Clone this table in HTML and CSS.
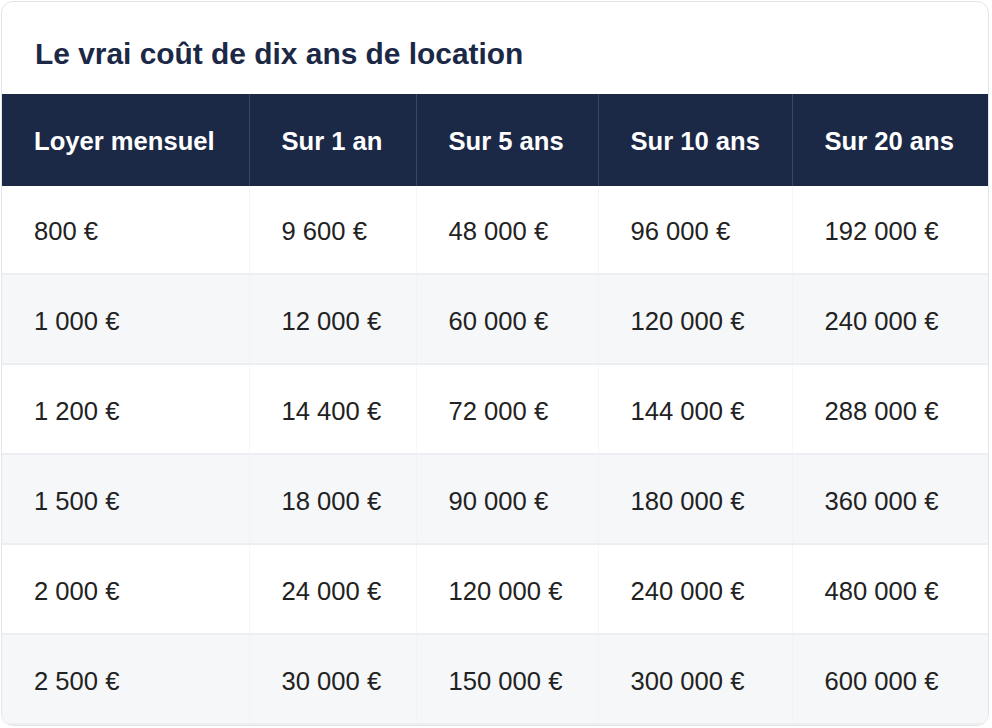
FILE: index.html
```html
<!DOCTYPE html>
<html lang="fr">
<head>
<meta charset="utf-8">
<title>Le vrai coût de dix ans de location</title>
<link rel="stylesheet" href="styles.css">
</head>
<body>
<div class="card">
  <h2 class="title">Le vrai coût de dix ans de location</h2>
  <table class="tbl">
    <colgroup>
      <col class="c1"><col class="c2"><col class="c3"><col class="c4"><col class="c5">
    </colgroup>
    <thead>
      <tr><th>Loyer mensuel</th><th>Sur 1 an</th><th>Sur 5 ans</th><th>Sur 10 ans</th><th>Sur 20 ans</th></tr>
    </thead>
    <tbody>
      <tr><td>800 €</td><td>9 600 €</td><td>48 000 €</td><td>96 000 €</td><td>192 000 €</td></tr>
      <tr><td>1 000 €</td><td>12 000 €</td><td>60 000 €</td><td>120 000 €</td><td>240 000 €</td></tr>
      <tr><td>1 200 €</td><td>14 400 €</td><td>72 000 €</td><td>144 000 €</td><td>288 000 €</td></tr>
      <tr><td>1 500 €</td><td>18 000 €</td><td>90 000 €</td><td>180 000 €</td><td>360 000 €</td></tr>
      <tr><td>2 000 €</td><td>24 000 €</td><td>120 000 €</td><td>240 000 €</td><td>480 000 €</td></tr>
      <tr><td>2 500 €</td><td>30 000 €</td><td>150 000 €</td><td>300 000 €</td><td>600 000 €</td></tr>
    </tbody>
  </table>
</div>
</body>
</html>
```

FILE: styles.css
```css
html, body {
  margin: 0;
  padding: 0;
  background: #ffffff;
}
body {
  font-family: "Liberation Sans", Arial, Helvetica, sans-serif;
  padding: 1px;
}
.card {
  width: 986px;
  border: 1px solid #e2e5e9;
  border-radius: 12px;
  overflow: hidden;
  background: #ffffff;
}
.title {
  margin: 0;
  padding: 35px 33px 23px;
  font-size: 29.9px;
  line-height: 34px;
  font-weight: 700;
  color: #1b2846;
}
.tbl {
  width: 986px;
  border-collapse: collapse;
  table-layout: fixed;
}
.c1 { width: 247px; }
.c2 { width: 167px; }
.c3 { width: 182px; }
.c4 { width: 194px; }
.c5 { width: 196px; }
.tbl th {
  background: #1b2846;
  color: #ffffff;
  font-size: 25.6px;
  font-weight: 700;
  text-align: left;
  line-height: 30px;
  padding: 32px 32px 30px 32px;
  border-left: 1px solid #3b4760;
  white-space: nowrap;
}
.tbl th:first-child { border-left: none; }
.tbl td {
  font-size: 25.6px;
  color: #222222;
  line-height: 30px;
  padding: 31px 32px 27px 32px;
  border-bottom: 2px solid #eceef1;
  border-left: 1px solid #f6f7f9;
  white-space: nowrap;
}
.tbl td:first-child { border-left: none; }
.tbl tbody tr:first-child td { padding-top: 30px; }
.tbl tbody tr:nth-child(even) td { background: #f6f7f9; border-left-color: #f2f3f6; }
```
